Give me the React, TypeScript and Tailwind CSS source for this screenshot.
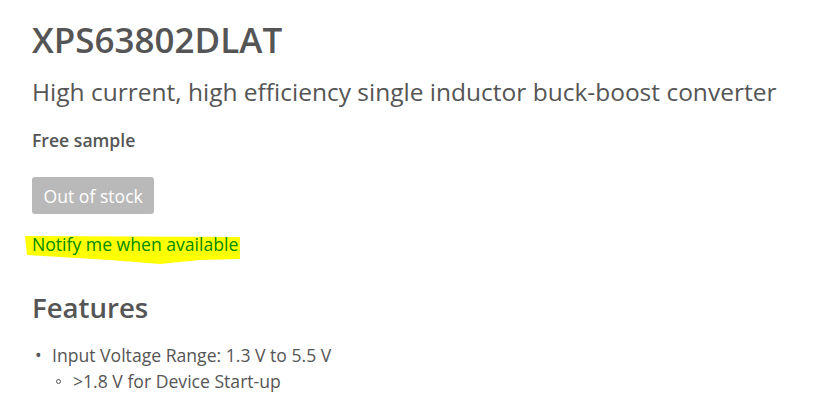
export default function App() {
  return (
    <main className="min-h-screen bg-white px-[32px] pt-[14px] text-[#555555]" style={{ fontFamily: '"Open Sans", sans-serif' }}>
      <h1 className="text-[35px] font-semibold leading-[52px]">XPS63802DLAT</h1>
      <p className="mt-[8px] text-[24.5px] leading-[36px]">
        High current, high efficiency single inductor buck-boost converter
      </p>
      <p className="mt-[17px] text-[17.6px] font-semibold leading-[26px]">Free sample</p>
      <button className="mt-[24px] h-[37px] rounded-[3px] bg-[#b9b9b9] px-[11.5px] text-[17.6px] leading-[24px] text-white">
        Out of stock
      </button>
      <div className="relative mt-[18px] w-fit">
        <svg className="absolute left-[-8px] top-0" width="220" height="34" viewBox="0 0 220 34">
          <polygon
            points="1,4 216,5 216,27 176,28 136,32 86,28 36,25 3,23"
            fill="#ffff00"
          />
        </svg>
        <a className="relative block text-[17.6px] leading-[24px] text-[#008a00]" href="#">
          Notify me when available
        </a>
      </div>
      <h2 className="mt-[31px] text-[27.6px] font-semibold leading-[40px]">Features</h2>
      <ul className="mt-[15px] text-[17.6px] leading-[26px]">
        <li className="flex">
          <span className="w-[20px] pl-[3px]">•</span>
          <div>
            Input Voltage Range: 1.3 V to 5.5 V
            <div className="flex items-center">
              <span className="ml-[4px] mr-[12px] h-[5px] w-[5px] rounded-full border border-[#555555]" />
              <span>&gt;1.8 V for Device Start-up</span>
            </div>
          </div>
        </li>
      </ul>
    </main>
  );
}
